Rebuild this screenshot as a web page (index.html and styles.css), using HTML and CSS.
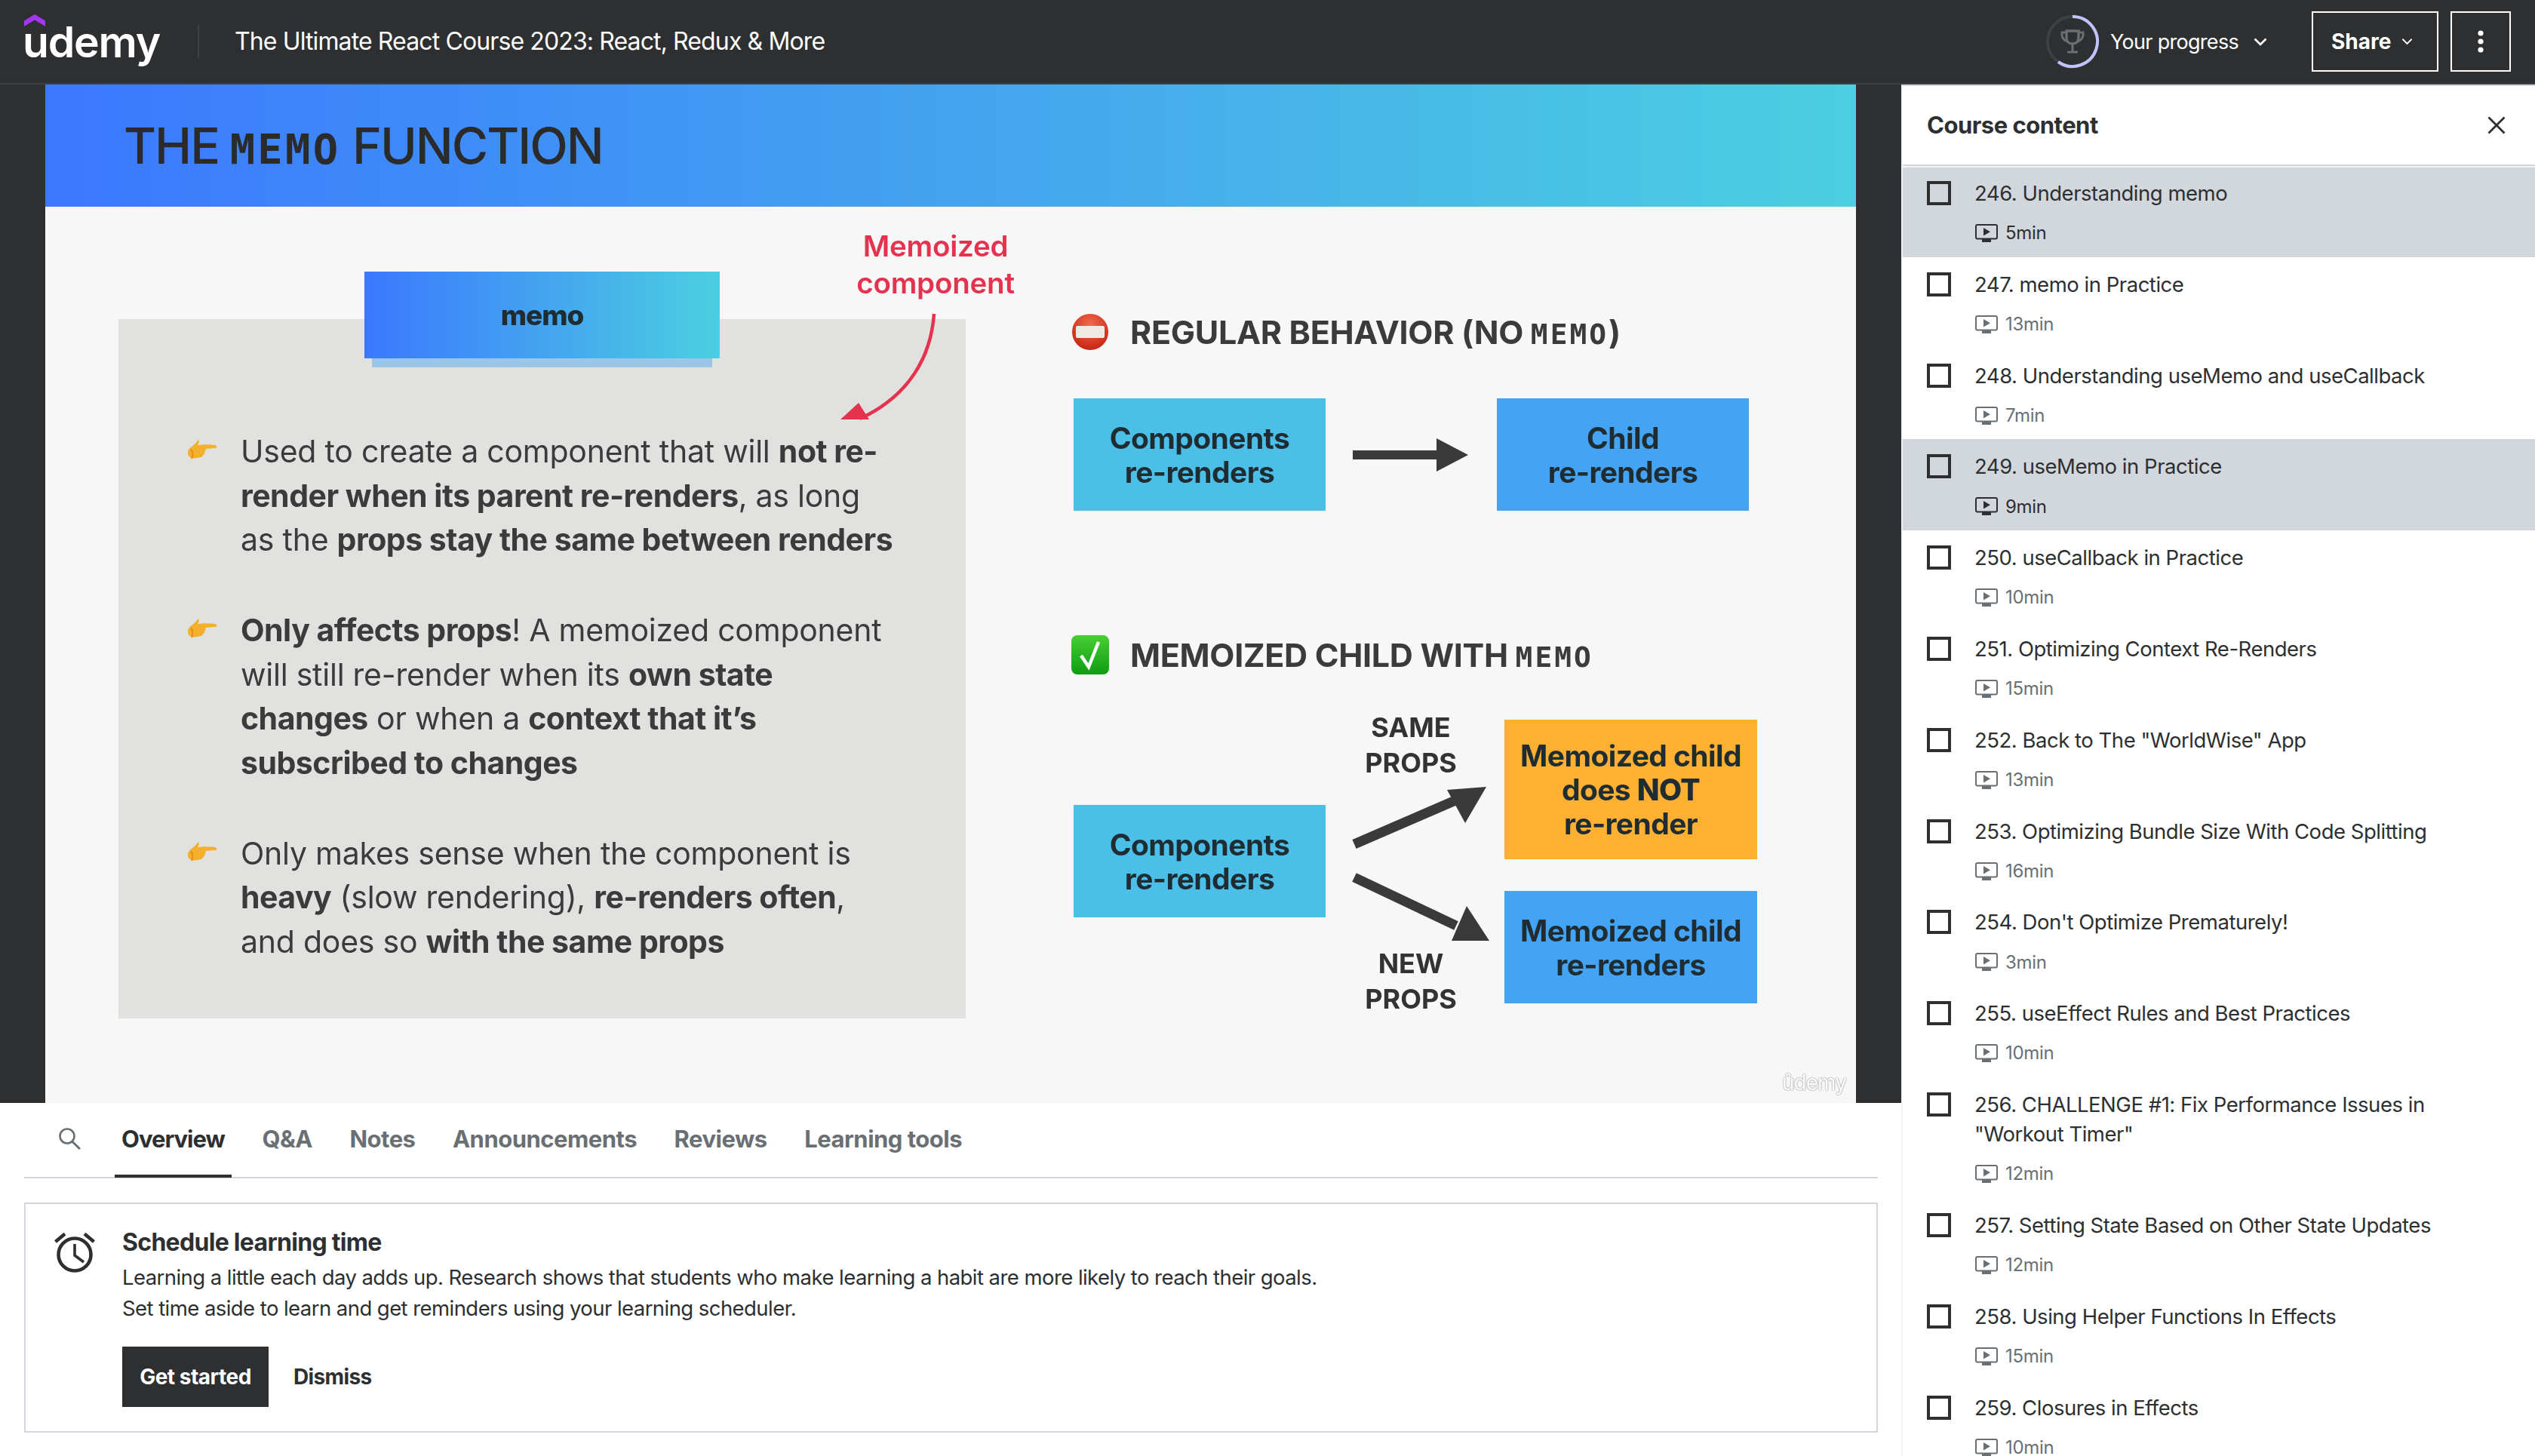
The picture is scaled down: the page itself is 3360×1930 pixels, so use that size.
FILE: index.html
```html
<!DOCTYPE html>
<html lang="en">
<head>
<meta charset="utf-8">
<title>The Ultimate React Course 2023</title>
<link rel="stylesheet" href="styles.css">
</head>
<body>
<svg class="defs" width="0" height="0" aria-hidden="true">
  <defs>
    <radialGradient id="stop-fill" cx="50%" cy="30%" r="75%"><stop offset="0" stop-color="#f26a4e"/><stop offset="1" stop-color="#c4200f"/></radialGradient>
    <linearGradient id="check-fill" x1="0" y1="0" x2="0" y2="1"><stop offset="0" stop-color="#49cf34"/><stop offset="1" stop-color="#0f9c12"/></linearGradient>
  </defs>
  <symbol id="play" viewBox="0 0 30 24">
    <rect x="1" y="1" width="28" height="18.5" rx="2" fill="none" stroke="currentColor" stroke-width="2"/>
    <path d="M11 5l9 5.2-9 5.2z" fill="currentColor"/>
    <rect x="9" y="20" width="12" height="4" fill="currentColor"/>
  </symbol>
  <symbol id="hand" viewBox="0 0 41 28">
    <path d="M2 17c0-4 2-6 5-8 3-2 6-6 9-9 1 1 1 3 0 5l-1 2c7-1 16-1 23 0 3 1 3 4 0 4l-13 1c1 2 1 3-1 4 1 2 0 3-2 4 0 2-1 3-3 3-3 1-8 2-12 1-3-1-5-3-5-7z" fill="#f2b02c"/>
    <path d="M6 13c3 3 3 8 1 12" fill="none" stroke="#e08c12" stroke-width="2"/>
  </symbol>
</svg>

<header class="topbar">
  <div class="logo">
    <svg class="logo-mark" viewBox="0 0 28 16"><path d="M14 0l14 8.6V16L14 7.6 0 16V8.6z" fill="#a435f0"/></svg>
    <span class="logo-word">udemy</span>
  </div>
  <span class="topbar-divider"></span>
  <h1 class="course-title">The Ultimate React Course 2023: React, Redux &amp; More</h1>
  <div class="progress">
    <svg class="progress-ring" viewBox="0 0 72 72">
      <circle cx="36" cy="36" r="33" fill="none" stroke="#3e4143" stroke-width="4"/>
      <path d="M36 3A33 33 0 1 1 17 63" fill="none" stroke="#c0c4fc" stroke-width="4"/>
      <path d="M28 22h16v9c0 5-3 8-8 8s-8-3-8-8z" fill="none" stroke="#6a6f73" stroke-width="3.400"/>
      <path d="M28 24h-6c-1 6 2 10 7 12M44 24h6c1 6-2 10-7 12M36 39v10M29 50h14" fill="none" stroke="#6a6f73" stroke-width="3"/>
    </svg>
    <span class="progress-label">Your progress</span>
    <svg class="chev" viewBox="0 0 18 11"><path d="M1.500 1.500L9 9l7.500-7.500" fill="none" stroke="#fff" stroke-width="2.600"/></svg>
  </div>
  <button class="btn-outline share">Share
    <svg class="chev-small" viewBox="0 0 16 10"><path d="M1.500 1.500L8 8l6.500-6.500" fill="none" stroke="#fff" stroke-width="2"/></svg>
  </button>
  <button class="btn-outline more" aria-label="More">
    <svg class="dots" viewBox="0 0 8 30"><circle cx="4" cy="4" r="3.600" fill="#fff"/><circle cx="4" cy="15" r="3.600" fill="#fff"/><circle cx="4" cy="26" r="3.600" fill="#fff"/></svg>
  </button>
</header>

<div class="layout">
  <main class="main">
    <section class="video">
      <div class="slide">
        <div class="slide-head"><h2 class="slide-title">THE <code>MEMO</code> FUNCTION</h2></div>

        <div class="panel">
          <ul class="bullets">
            <li><svg class="hand"><use href="#hand"/></svg><p>Used to create a component that will <b>not re-<br>render when its parent re-renders</b>, as long<br>as the <b>props stay the same between renders</b></p></li>
            <li><svg class="hand"><use href="#hand"/></svg><p><b>Only affects props</b>! A memoized component<br>will still re-render when its <b>own state<br>changes</b> or when a <b>context that it’s<br>subscribed to changes</b></p></li>
            <li><svg class="hand"><use href="#hand"/></svg><p>Only makes sense when the component is<br><b>heavy</b> (slow rendering), <b>re-renders often</b>,<br>and does so <b>with the same props</b></p></li>
          </ul>
        </div>
        <div class="memo-badge">memo</div>
        <div class="memoized-note">Memoized<br>component</div>
        <svg class="note-arrow" viewBox="0 0 140 160"><path d="M128 4C124 60 96 112 30 143" fill="none" stroke="#e5334f" stroke-width="4.500"/><path d="M4 144l24-22 14 22z" fill="#e5334f"/></svg>

        <div class="heading heading-regular">
          <svg class="heading-icon" viewBox="0 0 50 50"><circle cx="25" cy="25" r="24" fill="url(#stop-fill)"/><rect x="6" y="17" width="38" height="16" rx="2" fill="#efe9e6"/></svg>
          <h3>REGULAR BEHAVIOR (NO <code>MEMO</code>)</h3>
        </div>
        <div class="box cyan box-parent-a"><span>Components<br>re-renders</span></div>
        <svg class="flow-arrow" viewBox="0 0 153 44"><path d="M0 16h111V0l42 22-42 22V28H0z" fill="#3a3a3a"/></svg>
        <div class="box blue box-child-a"><span>Child<br>re-renders</span></div>

        <div class="heading heading-memo">
          <svg class="heading-icon check" viewBox="0 0 50 52"><rect x="0" y="0" width="50" height="52" rx="8" fill="url(#check-fill)"/><path d="M13 27l10 15L36 9" fill="none" stroke="#fff" stroke-width="4.500"/></svg>
          <h3>MEMOIZED CHILD WITH <code>MEMO</code></h3>
        </div>
        <div class="box cyan box-parent-b"><span>Components<br>re-renders</span></div>
        <div class="props props-same">SAME<br>PROPS</div>
        <svg class="split-arrows" viewBox="0 0 190 220">
          <path d="M5 82L139 24" stroke="#3a3a3a" stroke-width="13" fill="none"/>
          <path d="M180 6l-28 48-24-44z" fill="#3a3a3a"/>
          <path d="M5 126L140 190" stroke="#3a3a3a" stroke-width="13" fill="none"/>
          <path d="M184 210l-50 0 20-46z" fill="#3a3a3a"/>
        </svg>
        <div class="props props-new">NEW<br>PROPS</div>
        <div class="box orange box-child-b"><span>Memoized child<br>does <b>NOT</b><br>re-render</span></div>
        <div class="box blue box-child-c"><span>Memoized child<br>re-renders</span></div>
        <div class="watermark">ûdemy</div>
      </div>
    </section>

    <nav class="tabs">
      <button class="tab-search" aria-label="Search">
        <svg viewBox="0 0 30 30"><circle cx="12" cy="12" r="9.500" fill="none" stroke="#6a6f73" stroke-width="2.600"/><path d="M18.500 19L29 29" stroke="#6a6f73" stroke-width="3" fill="none"/></svg>
      </button>
      <a class="tab active">Overview</a>
      <a class="tab">Q&amp;A</a>
      <a class="tab">Notes</a>
      <a class="tab">Announcements</a>
      <a class="tab">Reviews</a>
      <a class="tab">Learning tools</a>
    </nav>

    <section class="reminder">
      <svg class="alarm" viewBox="0 0 54 54">
        <circle cx="27" cy="30" r="21.500" fill="none" stroke="#2d2f31" stroke-width="4.600"/>
        <path d="M27 16v15l12 9" fill="none" stroke="#2d2f31" stroke-width="3.600"/>
        <path d="M1.500 13L14 2.500M52.500 13L40 2.500" stroke="#2d2f31" stroke-width="4.600" fill="none"/>
      </svg>
      <div class="reminder-body">
        <h3>Schedule learning time</h3>
        <p>Learning a little each day adds up. Research shows that students who make learning a habit are more likely to reach their goals.<br>Set time aside to learn and get reminders using your learning scheduler.</p>
        <div class="reminder-actions">
          <button class="btn-solid">Get started</button>
          <button class="btn-ghost">Dismiss</button>
        </div>
      </div>
    </section>
  </main>

  <aside class="sidebar">
    <div class="sidebar-head">
      <h2>Course content</h2>
      <svg class="close" viewBox="0 0 24 24"><path d="M1.500 1.500l21 21M22.500 1.500l-21 21" stroke="#2d2f31" stroke-width="2.800" fill="none"/></svg>
    </div>
    <ol class="lessons">
      <li class="lesson current"><span class="check-box"></span><div><div class="lesson-title">246. Understanding memo</div><div class="lesson-meta"><svg><use href="#play"/></svg>5min</div></div></li>
      <li class="lesson"><span class="check-box"></span><div><div class="lesson-title">247. memo in Practice</div><div class="lesson-meta"><svg><use href="#play"/></svg>13min</div></div></li>
      <li class="lesson"><span class="check-box"></span><div><div class="lesson-title">248. Understanding useMemo and useCallback</div><div class="lesson-meta"><svg><use href="#play"/></svg>7min</div></div></li>
      <li class="lesson current"><span class="check-box"></span><div><div class="lesson-title">249. useMemo in Practice</div><div class="lesson-meta"><svg><use href="#play"/></svg>9min</div></div></li>
      <li class="lesson"><span class="check-box"></span><div><div class="lesson-title">250. useCallback in Practice</div><div class="lesson-meta"><svg><use href="#play"/></svg>10min</div></div></li>
      <li class="lesson"><span class="check-box"></span><div><div class="lesson-title">251. Optimizing Context Re-Renders</div><div class="lesson-meta"><svg><use href="#play"/></svg>15min</div></div></li>
      <li class="lesson"><span class="check-box"></span><div><div class="lesson-title">252. Back to The "WorldWise" App</div><div class="lesson-meta"><svg><use href="#play"/></svg>13min</div></div></li>
      <li class="lesson"><span class="check-box"></span><div><div class="lesson-title">253. Optimizing Bundle Size With Code Splitting</div><div class="lesson-meta"><svg><use href="#play"/></svg>16min</div></div></li>
      <li class="lesson"><span class="check-box"></span><div><div class="lesson-title">254. Don't Optimize Prematurely!</div><div class="lesson-meta"><svg><use href="#play"/></svg>3min</div></div></li>
      <li class="lesson"><span class="check-box"></span><div><div class="lesson-title">255. useEffect Rules and Best Practices</div><div class="lesson-meta"><svg><use href="#play"/></svg>10min</div></div></li>
      <li class="lesson"><span class="check-box"></span><div><div class="lesson-title">256. CHALLENGE #1: Fix Performance Issues in<br>"Workout Timer"</div><div class="lesson-meta"><svg><use href="#play"/></svg>12min</div></div></li>
      <li class="lesson"><span class="check-box"></span><div><div class="lesson-title">257. Setting State Based on Other State Updates</div><div class="lesson-meta"><svg><use href="#play"/></svg>12min</div></div></li>
      <li class="lesson"><span class="check-box"></span><div><div class="lesson-title">258. Using Helper Functions In Effects</div><div class="lesson-meta"><svg><use href="#play"/></svg>15min</div></div></li>
      <li class="lesson"><span class="check-box"></span><div><div class="lesson-title">259. Closures in Effects</div><div class="lesson-meta"><svg><use href="#play"/></svg>10min</div></div></li>
    </ol>
  </aside>
</div>
</body>
</html>
```

FILE: styles.css
```css
* { box-sizing: border-box; }
html, body { margin: 0; height: 1930px; overflow: hidden; background: #fff; }
body { font-family: Inter, "Liberation Sans", sans-serif; color: #2d2f31; }
h1, h2, h3, p, ul, ol { margin: 0; padding: 0; }
ul, ol { list-style: none; }
button { font: inherit; background: none; border: 0; padding: 0; color: inherit; }
.defs { position: absolute; }

/* top bar */
.topbar { height: 112px; background: #2d2f31; border-bottom: 2px solid #3e4143; display: flex; align-items: center; padding: 0 32px; color: #fff; }
.logo { width: 182px; height: 70px; position: relative; }
.logo-mark { position: absolute; left: 0; top: -1px; width: 28px; height: 16px; }
.logo-word { position: absolute; left: -2px; top: 1px; font-size: 57px; line-height: 70px; font-weight: 600; letter-spacing: -1.200px; }
.topbar-divider { width: 2px; height: 44px; background: #3e4143; margin-left: 48px; }
.course-title { font-size: 32px; line-height: 44px; font-weight: 400; margin-left: 47px; letter-spacing: -0.880px; white-space: nowrap; }
.progress { margin-left: auto; display: flex; align-items: center; }
.progress-ring { width: 72px; height: 72px; }
.progress-label { font-size: 27px; margin-left: 14px; letter-spacing: -0.700px; }
.chev { width: 18px; height: 11px; margin-left: 20px; }
.btn-outline { border: 2px solid #fff; height: 80px; display: flex; align-items: center; color: #fff; }
.share { width: 168px; margin-left: 59px; padding-left: 24px; font-size: 28px; font-weight: 700; gap: 14px; }
.chev-small { width: 15px; height: 10px; }
.more { width: 80px; margin-left: 16px; justify-content: center; }
.dots { width: 8px; height: 30px; }

/* layout */
.layout { display: flex; height: 1818px; }
.main { width: 2520px; flex: none; }
.sidebar { flex: 1; border-top: 2px solid #d1d7dc; border-left: 2px solid #f0f2f3; overflow: hidden; }

/* video + slide */
.video { background: #2d2f31; height: 1350px; padding: 0 60px; }
.slide { position: relative; height: 1350px; background: #f7f7f7; overflow: hidden; filter: blur(0.6px); }
.slide code { font-family: "DejaVu Sans Mono", monospace; font-weight: 700; letter-spacing: 0.060em; font-size: 0.84em; }
.slide-head { height: 162px; background: linear-gradient(90deg, #3b78ff, #4ccfe0); display: flex; align-items: center; padding-left: 104px; }
.slide-title { font-size: 66px; font-weight: 500; color: #2b2b2b; letter-spacing: -2px; }
.slide-title code { margin-left: -1px; }

.panel { position: absolute; left: 97px; top: 311px; width: 1123px; height: 927px; background: #e1e1df; padding: 146px 0 0 162px; }
.bullets { display: flex; flex-direction: column; gap: 61.500px; }
.bullets li { position: relative; }
.bullets p { font-size: 41px; line-height: 58.500px; letter-spacing: -0.240px; color: #3b3b3b; white-space: nowrap; }
.bullets b { letter-spacing: -0.500px; }
.hand { position: absolute; left: -72px; top: 14px; width: 41px; height: 28px; }
.memo-badge { position: absolute; left: 423px; top: 248px; width: 471px; height: 115px; background: linear-gradient(90deg, #3b78ff, #4ccfe0); display: flex; align-items: center; justify-content: center; font-size: 37px; font-weight: 800; letter-spacing: -1px; color: #1f2d33; box-shadow: 0 22px 0 -10px #9cc6e8; }
.memoized-note { position: absolute; left: 1030px; top: 190px; width: 300px; text-align: center; color: #e5334f; font-size: 38.500px; line-height: 49px; font-weight: 600; letter-spacing: -0.200px; }
.note-arrow { position: absolute; left: 1050px; top: 300px; width: 140px; height: 160px; }

.heading { position: absolute; left: 1360px; display: flex; align-items: center; color: #3b3b3b; }
.heading h3 { font-size: 43px; font-weight: 700; letter-spacing: -0.300px; white-space: nowrap; }
.heading code { font-size: 0.880em; letter-spacing: 0.080em; }
.heading-icon { width: 50px; height: 50px; margin-right: 28px; }
.heading-icon.check { height: 52px; }
.heading-regular { top: 302px; }
.heading-memo { top: 730px; }

.box { position: absolute; width: 334px; height: 149px; display: flex; align-items: center; justify-content: center; text-align: center; font-size: 39px; line-height: 45px; font-weight: 700; letter-spacing: -0.600px; color: #1f2d33; }
.box b { font-weight: 800; }
.cyan { background: #4bbfe8; }
.blue { background: #44a3f2; }
.orange { background: #fdb032; }
.box-parent-a { left: 1363px; top: 416px; }
.box-child-a { left: 1924px; top: 416px; }
.flow-arrow { position: absolute; left: 1733px; top: 469px; width: 153px; height: 44px; }
.box-parent-b { left: 1363px; top: 955px; }
.box-child-b { left: 1934px; top: 842px; width: 335px; height: 185px; }
.box-child-c { left: 1934px; top: 1069px; width: 335px; }
.props { position: absolute; left: 1700px; width: 220px; text-align: center; color: #333; font-size: 36px; line-height: 47px; font-weight: 700; }
.props-same { top: 829px; }
.props-new { top: 1142px; }
.split-arrows { position: absolute; left: 1730px; top: 925px; width: 190px; height: 220px; }
.watermark { position: absolute; left: 2302px; top: 1306px; font-size: 28px; color: #fff; text-shadow: 0 0 2px #888, 0 0 1px #888; letter-spacing: -1px; }

/* tabs */
.tabs { margin: 0 31px 0 32px; height: 100px; padding-bottom: 4px; border-bottom: 2px solid #d1d7dc; display: flex; align-items: center; }
.tab-search { width: 30px; height: 30px; margin-left: 45px; }
.tab-search svg { display: block; width: 30px; height: 30px; }
.tab { position: relative; font-size: 31px; font-weight: 700; color: #6a6f73; margin-right: 49.500px; letter-spacing: -0.500px; }
.tab.active { color: #2d2f31; margin-left: 54px; letter-spacing: -1px; }
.tab.active::after { content: ""; position: absolute; left: -9px; right: -9px; top: 66px; height: 4px; background: #2d2f31; }

/* reminder */
.reminder { margin: 32px 31px 0 32px; height: 305px; border: 2px solid #d1d7dc; display: flex; padding: 31px 0 0 38px; }
.alarm { width: 54px; height: 54px; flex: none; margin-top: 6px; }
.reminder-body { margin-left: 36px; }
.reminder-body h3 { font-size: 32px; line-height: 40px; font-weight: 700; letter-spacing: -0.700px; }
.reminder-body p { font-size: 27.500px; line-height: 41px; margin-top: 6px; letter-spacing: -0.560px; white-space: nowrap; }
.reminder-actions { display: flex; align-items: center; margin-top: 30px; }
.btn-solid { width: 194px; height: 80px; background: #2d2f31; color: #fff; font-size: 28px; font-weight: 700; letter-spacing: -0.500px; }
.btn-ghost { margin-left: 33px; font-size: 28px; font-weight: 700; letter-spacing: -0.650px; }

/* sidebar */
.sidebar-head { height: 106px; border-bottom: 2px solid #d1d7dc; box-shadow: 0 2px 0 #f0f2f3; display: flex; align-items: center; justify-content: space-between; padding: 0 39px 0 32px; position: relative; background: #fff; }
.sidebar-head h2 { font-size: 31px; font-weight: 700; letter-spacing: -0.500px; position: relative; top: -1px; }
.close { width: 24px; height: 24px; }
.lesson { display: flex; padding: 16px 32px; }
.lesson.current { background: #d1d7dc; }
.check-box { width: 32px; height: 32px; border: 4px solid #2d2f31; margin: 4px 31px 0 0; flex: none; }
.lesson-title { font-size: 27.500px; line-height: 39.200px; letter-spacing: -0.480px; white-space: nowrap; position: relative; top: 1px; }
.lesson-meta { display: flex; align-items: center; font-size: 24px; line-height: 33.600px; margin-top: 16px; padding-left: 1px; color: #6a6f73; letter-spacing: -0.300px; position: relative; top: 1px; }
.current .lesson-meta { color: #2d2f31; }
.lesson-meta svg { width: 30px; height: 24px; margin-right: 10px; }
```
